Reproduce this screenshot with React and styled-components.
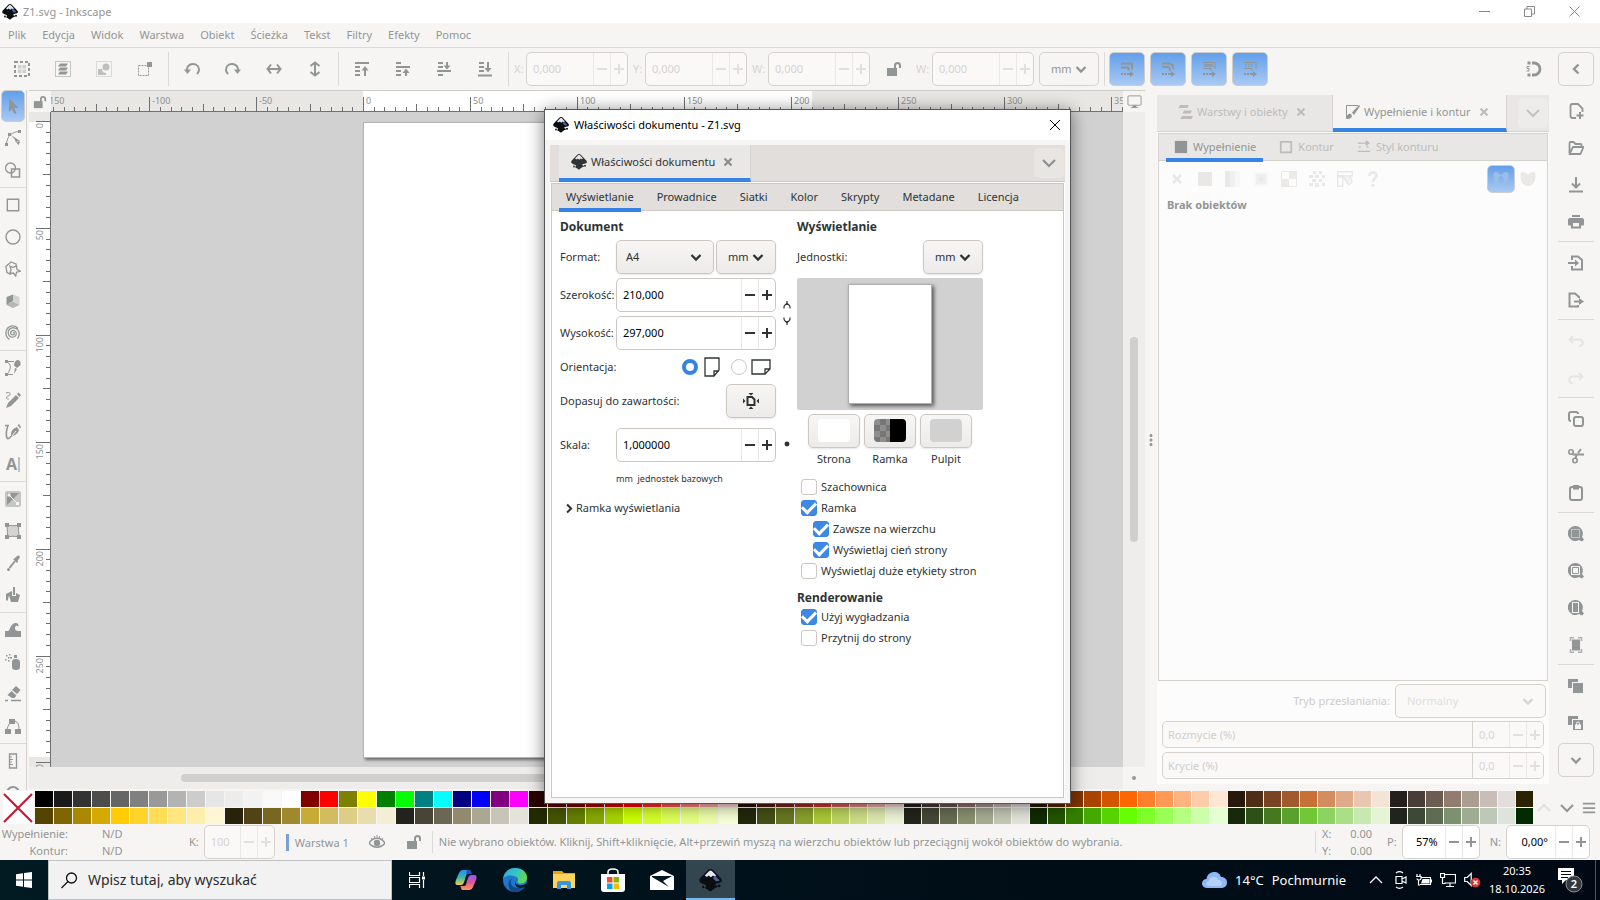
import styled, { createGlobalStyle, css } from "styled-components";

const GlobalStyle = createGlobalStyle`
  * {
    box-sizing: border-box;
  }
  body {
    margin: 0;
    overflow: hidden;
    background: #f6f5f4;
    color: #2e3436;
    font-family: "Noto Sans", "Open Sans", sans-serif;
    font-size: 11px;
    line-height: 16px;
  }
  button, input, select {
    margin: 0;
    padding: 0;
    font: inherit;
    color: inherit;
    border: 0;
    background: none;
    appearance: none;
    outline: 0;
  }
`;

/* ---------- icons ---------- */

const line = { fill: "none", stroke: "currentColor", strokeWidth: 2 };
const thin = { fill: "none", stroke: "currentColor", strokeWidth: 1 };

const ICONS = {
  selectAll: (
    <>
      <rect x="1" y="1" width="14" height="14" {...line} strokeDasharray="3 2" />
      <path d="M4 4h3.500v3.500H4zM8.500 4H12v3.500H8.500zM4 8.500h3.500V12H4zM8.500 8.500H12V12H8.500z" opacity=".4" />
    </>
  ),
  selectLayers: (
    <>
      <rect x=".5" y=".5" width="15" height="15" {...thin} strokeDasharray="1 1" />
      <path d="M5 2.500h8l-2 3H3zM5 6.500h8l-2 3H3zM5 10.500h8l-2 3H3z" />
    </>
  ),
  deselect: (
    <g opacity=".55">
      <rect x=".5" y=".5" width="15" height="15" {...thin} strokeDasharray="1 1" />
      <circle cx="10" cy="6" r="3.500" />
      <path d="M2 8h4c0 3 2 4 4 4v2H2z" />
    </g>
  ),
  touch: (
    <>
      <path d="M1.500 4.500h10v10h-10z" {...thin} strokeDasharray="2 1" />
      <path d="M10 1h5v5h-5z" />
    </>
  ),
  rotateLeft: (
    <>
      <path d="M3 11C2 6 5 3 9 3c4 0 6 3 6 6 0 2-1 3-2 4" {...line} />
      <path d="M0 8.500h7L3.500 13z" />
    </>
  ),
  rotateRight: (
    <>
      <path d="M13 11c1-5-2-8-6-8-4 0-6 3-6 6 0 2 1 3 2 4" {...line} />
      <path d="M16 8.500H9l3.500 4.500z" />
    </>
  ),
  flipH: <path d="M5 3.500L1.500 8 5 12.500M11 3.500L14.500 8 11 12.500M2 8h12" {...line} />,
  flipV: <path d="M3.500 5L8 1.500 12.500 5M3.500 11L8 14.500 12.500 11M8 2v12" {...line} />,
  raiseTop: (
    <>
      <path d="M1 2h14M1 6h5M1 10h5M1 14h5M11 15V7" {...line} />
      <path d="M7.500 9.500L11 5l3.500 4.500z" />
    </>
  ),
  raise: (
    <>
      <path d="M1 2h5M1 6h14M1 10h5M1 14h5M11 15v-5" {...line} />
      <path d="M7.500 12L11 7.500l3.500 4.500z" />
    </>
  ),
  lower: (
    <>
      <path d="M2 2h5M2 6h5M1 10h14M2 14h5M11 1v4" {...line} />
      <path d="M7.500 4.500h7L11 8.500z" />
    </>
  ),
  lowerBottom: (
    <>
      <path d="M2 2h5M2 6h5M2 10h5M1 14.500h14M11 1v7" {...line} />
      <path d="M7.500 7h7L11 11.500z" />
    </>
  ),
  unlock: (
    <>
      <path d="M1 7h10v8H1z" />
      <path d="M9 8V4.500a2.500 2.500 0 0 1 5 0V7" {...line} />
    </>
  ),
  scaleStroke: (
    <>
      <path d="M2 2.500h11v6M2 6.500h7.500v3" {...line} />
      <path d="M2 12h2v2H2zM5 12h2v2H5zM8 12h3v-2l4 3-4 3v-2H8z" />
    </>
  ),
  scaleCorners: (
    <>
      <path d="M2 2.500h6c4 0 5.500 2 5.500 6M2 6h5c2.500 0 3 2 3 4" {...line} strokeWidth="1.800" />
      <path d="M2 12h2v2H2zM5 12h2v2H5zM8 12h3v-2l4 3-4 3v-2H8z" />
    </>
  ),
  scaleGradient: (
    <>
      <path d="M2 1.500h12V8M2 7.500h8V10" {...thin} />
      <path d="M3 3h9v3H3z" opacity=".7" />
      <path d="M2 12h2v2H2zM5 12h2v2H5zM8 12h3v-2l4 3-4 3v-2H8z" />
    </>
  ),
  scalePattern: (
    <>
      <path d="M2 1.500h12V8M2 7.500h8V10M3 3l1.500 1.500L3 6M6 3l1.500 1.500L6 6M9 3l1.500 1.500L9 6" {...thin} />
      <path d="M2 12h2v2H2zM5 12h2v2H5zM8 12h3v-2l4 3-4 3v-2H8z" />
    </>
  ),
  snap: (
    <>
      <path d="M6 2h2a6 6 0 0 1 0 12H6" {...line} strokeWidth="2.800" />
      <path d="M1.500.6h3v2.800h-3zM1.500 12.600h3v2.800h-3z" />
      <path d="M3.500 5.500H1v2h2v2.500H.5" {...thin} />
    </>
  ),
  back: <path d="M10.500 3.500L6 8l4.500 4.500" {...line} strokeWidth="2.400" />,
  down: <path d="M3.500 6L8 10.500 12.500 6" {...line} strokeWidth="2.300" />,
  downWide: <path d="M2 5l6 6 6-6" {...line} />,
  upWide: <path d="M2 11l6-6 6 6" {...line} />,
  right: <path d="M5 3l5 5-5 5" {...line} strokeWidth="2.500" />,
  minus: <path d="M3 8h10" {...line} />,
  plus: <path d="M3 8h10M8 3v10" {...line} />,
  close: <path d="M4 4l8 8M12 4l-8 8" {...line} strokeWidth="2.500" />,
  menu: <path d="M1 3h14M1 8h14M1 13h14" {...line} />,
  dots: <path d="M8 2a1.500 1.500 0 1 1 0 3 1.500 1.500 0 0 1 0-3zm0 4.500a1.500 1.500 0 1 1 0 3 1.500 1.500 0 0 1 0-3zM8 11a1.500 1.500 0 1 1 0 3 1.500 1.500 0 0 1 0-3z" />,
  dot: <circle cx="8" cy="8" r="2.200" />,
  arrow: <path d="M4 0v14l3-3 2.500 5 2-1-2.500-5h4.500z" />,
  node: (
    <>
      <path d="M1.500 14C2 6 7 2 14 1.500" {...thin} />
      <path d="M0 13h3v3H0zM3 3h3v3H3zM13 0h3v3h-3zM6 5l9 6-4 1.500L9.500 9zM11 12l2.500 3 1.500-3-2-1z" />
    </>
  ),
  builder: (
    <>
      <circle cx="5.500" cy="6" r="5" {...thin} strokeWidth="1.300" />
      <path d="M6.500 7h8v8h-8z" {...thin} strokeWidth="1.500" />
    </>
  ),
  rect: <path d="M1.500 1.500h13v13h-13z" {...thin} strokeWidth="1.600" />,
  circle: <circle cx="8" cy="8" r="7" {...thin} strokeWidth="1.400" />,
  star: (
    <>
      <path d="M6 13.500l-4-2L.8 5.500 6 1l5 2 .5 3" {...thin} strokeWidth="1.300" />
      <path d="M5 5l3 1.500L11.500 5l.5 3.500 3.300 1.700-3.800 1-.8 3.800-2.400-3-3.500.500L6 9z" {...thin} strokeWidth="1.300" />
    </>
  ),
  cube: (
    <>
      <path d="M1.500 4L8 1.500V8l-6.500 4z" />
      <path d="M8 1.500L14.500 4v8L8 8z" opacity=".35" />
      <path d="M1.500 12L8 8.500l6.500 3.500L8 15z" opacity=".65" />
    </>
  ),
  spiral: (
    <path
      d="M8 8c1-1 2 1 .5 1.700C6.500 10.500 5 8.500 6 6.800 7.500 4.500 11 5.500 11.300 8.300c.2 3-3 4.500-5.500 3.500C2.800 10.500 2.500 6.500 4.500 4.300 7 1.800 11.500 2.500 13.300 5.500c1.500 2.500 1 5.500-.8 8M13 3.500C10-.5 4 .3 1.800 4.500 0 8 1 12.500 4.500 14.500"
      {...thin}
      strokeWidth="1.300"
    />
  ),
  pen: (
    <>
      <path d="M1.500 1.500C5 4 6 6 5 9c-1 3-2 4-3 5.500h6M2 1.500h7" {...thin} />
      <path d="M0 0h3v3H0zM0 13h3v3H0zM12 0c3 0 4 2 3.500 5L12 8 9 5.500C9 3 10 1 12 0zM10 8l2 1-3 5z" />
    </>
  ),
  pencil: (
    <>
      <path d="M1 1c3-1 5 0 4 2-1 1-4 1-3.500 3C2 7 3 7 4 7" {...thin} />
      <path d="M11 3l3 3-8 8-5 2 2-5zM12 2l1.500-1.500L16 3l-1.500 2z" />
    </>
  ),
  calligraphy: (
    <>
      <path d="M0 1.500h3C1 6 1 12 2 14c1 1.500 3 0 4-2" {...line} strokeWidth="1.600" />
      <path d="M6 12c0-5 1-7 6-9l2 3c-1 4-4 5-8 7zM12.500 1l1.500-1 2 3-1 1.500z" />
      <path d="M7 12l4-5" stroke="#f6f5f4" />
    </>
  ),
  gradient: (
    <>
      <rect x="0" y="0" width="16" height="16" rx="2" opacity=".5" />
      <path d="M2 2h12L8 8 2 14z" />
      <path d="M4 4l8 8" stroke="#f6f5f4" />
      <path d="M2.500 2.500h3v3h-3zM11 11h3v3h-3z" fill="#f6f5f4" />
    </>
  ),
  mesh: (
    <>
      <path d="M2 2c4 1 8 1 12 0-1 4 0 8 0 12-4-1-8-1-12 0 1-4 0-8 0-12z" opacity=".35" />
      <path d="M2 2c4 1 8 1 12 0-1 4 0 8 0 12-4-1-8-1-12 0 1-4 0-8 0-12z" {...thin} />
      <path d="M0 0h4v4H0zM12 0h4v4h-4zM0 12h4v4H0zM12 12h4v4h-4z" />
    </>
  ),
  dropper: (
    <>
      <path d="M9.500 3.500L12 1c2-1.500 3.500 0 2.500 2L12.500 6l.500 1-1 1-4-4z" />
      <path d="M10 6l-5.500 7" {...line} />
      <circle cx="3.500" cy="14.500" r="1.500" />
    </>
  ),
  bucket: (
    <>
      <path d="M1 7l6-3 8 4-2 7H6L4 8.500 2.500 14 1 13z" />
      <path d="M9 1v8" stroke="#f6f5f4" strokeWidth="4" />
      <path d="M9 0v8" {...line} />
    </>
  ),
  tweak: <path d="M0 9h3c2 0 2-7 7-8 3-.500 4 2 3.500 3.500C12 3 10 3.500 10 6c0 2 1 3 3 3h3v6H0z" />,
  spray: (
    <>
      <path d="M7 8c0-2 1-3 3-3h1c2 0 4 1 4 3v5c0 2-1 3-4 3s-4-1-4-3zM9 1h3v3H9z" />
      <path d="M1 1h1.500v1.500H1zM4 0h1.500v1.500H4zM3 3h1.500v1.500H3zM0 5h1.500v1.500H0zM5 3h2v1.500H5zM3 6h1.500v1.500H3z" />
    </>
  ),
  eraser: (
    <>
      <path d="M11 0l4.500 4-3.500 4-5-4zM6.500 5l5 4.500-2 2.500H7L2.500 9z" />
      <path d="M0 14.500h3M6 14.500h10" {...thin} strokeWidth="1.500" />
    </>
  ),
  connector: (
    <>
      <path d="M4 1h6v5H4zM0 11h6v5H0zM10 11h6v5h-6z" />
      <path d="M4 6l-2 5M10 3c3 1 4 4 4 8" {...thin} />
    </>
  ),
  measure: (
    <>
      <path d="M4.500 1h7v14h-7z" {...thin} strokeWidth="1.300" />
      <path d="M5 4h2M5 6.500h3M5 9h2M5 11.500h3" {...thin} />
    </>
  ),
  zoom: <circle cx="8" cy="8" r="6" {...line} />,
  monitor: (
    <>
      <rect x="1" y="2" width="14" height="10" rx="1" {...thin} />
      <path d="M6 12h4v2H6zM4 14h8v1H4z" />
    </>
  ),
  layers: <path d="M3 1h9l-1.500 3H1.500zM7 6.500h8l-1.500 3H5.500zM5 12h11l-1.500 3H3.500z" />,
  fillStroke: (
    <>
      <path d="M2.500 14V1.500H14" {...thin} />
      <path d="M2 15c1-5 3-6 5-5l1 2c-1 3-3 3-6 3zM8 8.500L15 1l1 1-6 9z" />
    </>
  ),
  square: <path d="M1 1h14v14H1z" />,
  squareOutline: <path d="M2 2h12v12H2z" {...line} />,
  strokeStyle: (
    <>
      <path d="M1 3.500h12M2 8h2M11 8h2M1 13h14" {...line} strokeWidth="1.500" />
      <path d="M10 0l5 3.500L10 7z" />
    </>
  ),
  linear: (
    <>
      <path d="M0 0h5v16H0z" />
      <path d="M5 0h5v16H5z" opacity=".6" />
      <path d="M10 0h5v16h-5z" opacity=".25" />
    </>
  ),
  radial: (
    <>
      <path d="M1 1h14v14H1z" opacity=".25" />
      <path d="M3 3h10v10H3z" opacity=".5" />
      <path d="M6 6h4v4H6z" />
    </>
  ),
  meshFill: (
    <>
      <path d="M.5.5h15v15H.5z" {...thin} />
      <path d="M8 1h7v7H8zM1 8h7v7H1z" opacity=".9" />
    </>
  ),
  pattern: (
    <path d="M4 0h3v3H4zM10 0h3v3h-3zM0 4h4v3H0zM6 4h4v3H6zM13 4h3v3h-3zM3 8h4v3H3zM10 8h3v3h-3zM0 12h4v3H0zM6 12h4v4H6zM13 12h3v3h-3z" />
  ),
  swatch: (
    <>
      <path d="M.7.7h14.600v4H.7zM.7 5v10.300h5V6.500zM6 5.500l6 8.500 3-3-1.500-6" {...thin} strokeWidth="1.400" />
      <path d="M6 5h8v4l-2 3z" opacity=".5" />
    </>
  ),
  help: (
    <>
      <path d="M4.500 5C4.500 0 11.500.5 11.500 4.500 11.500 7 8 7.500 8 11" {...line} strokeWidth="2.600" />
      <circle cx="8" cy="14.300" r="1.600" />
    </>
  ),
  evenOdd: (
    <path
      fillRule="evenodd"
      d="M3 1c2 0 3 1 3 2 1 1 3 1 4 0 0-1 1-2 3-2 3 0 3 4 2 8-1 4-4 6-7 6s-6-2-7-6C0 5 0 1 3 1zM8 5c-2 0-3 3-3 5s1 3 3 3 3-1 3-3-1-5-3-5z"
    />
  ),
  nonZero: <path d="M3 1c2 0 3 2 5 2s3-2 5-2c3 0 3 4 2 8-1 4-4 6-7 6s-6-2-7-6C0 5 0 1 3 1z" />,
  newDoc: (
    <>
      <path d="M8 15H4.500C3 15 2.500 14 2.500 13V3c0-1.500.5-2 2-2H10l4.500 4.500V9" {...line} strokeWidth="1.800" />
      <path d="M12 9v7M8.500 12.500h7" {...line} />
    </>
  ),
  open: (
    <path
      d="M1.500 14V3c0-.5.5-1 1-1h3l2 2h5c.5 0 1 .5 1 1v1.500M1.500 14L5 7h10.500L12.500 14z"
      {...line}
      strokeWidth="1.800"
      strokeLinejoin="round"
    />
  ),
  save: <path d="M8 0v10M4 6.500L8 10.500l4-4M1 14.500h14" {...line} />,
  print: (
    <>
      <path d="M4 1h8v2H4zM2 4h12c1.500 0 2 1 2 2v4c0 1-.5 1.500-1.500 1.500H13V9H3v2.500H1.500C.5 11.500 0 11 0 10V6c0-1 .5-2 2-2z" />
      <path d="M4 9v4.500h8V9" {...line} />
    </>
  ),
  importDoc: (
    <>
      <path d="M4 5V1.500h6L14 5v9.500H4V11" {...line} />
      <path d="M0 8h8" {...line} />
      <path d="M7 4.500L11 8l-4 3.500z" />
    </>
  ),
  exportDoc: (
    <>
      <path d="M10 13v1.500H1.500v-13H7L11 5v1" {...line} />
      <path d="M6 9.500h6" {...line} />
      <path d="M11 6l5 3.500-5 3.500z" />
    </>
  ),
  undo: <path d="M5 3L1.500 6.500 5 10M2 6.500h9.500a3 3 0 0 1 0 6.500" {...line} />,
  redo: <path d="M11 3l3.500 3.500L11 10M14 6.500H4.500a3 3 0 0 0 0 6.500" {...line} />,
  copy: (
    <>
      <rect x="6" y="6" width="9" height="9" rx="2" {...line} />
      <path d="M3 10C1.500 10 1 9 1 8V3c0-1 1-2 2-2h5c1 0 2 .5 2 2" {...line} />
    </>
  ),
  cut: (
    <>
      <circle cx="3" cy="4" r="2.200" {...line} strokeWidth="1.600" />
      <circle cx="7" cy="12.500" r="2.200" {...line} strokeWidth="1.600" />
      <path d="M4.500 6.500H16M7.500 10.500L8.500 7M10 5l3-4" {...line} />
    </>
  ),
  paste: (
    <>
      <rect x="2" y="2" width="12" height="13" rx="2" {...line} />
      <path d="M5 0h6v4.500H5z" />
    </>
  ),
  zoomSelection: (
    <>
      <path d="M7.500 0a7.500 7.500 0 0 1 6.500 11l2 2.500-2 2-3-1.500A7.500 7.500 0 1 1 7.500 0z" />
      <path d="M3.500 3.500h8v8h-8z" fill="none" stroke="#f6f5f4" strokeDasharray="1 1" />
    </>
  ),
  zoomDrawing: (
    <>
      <path d="M7.500 0a7.500 7.500 0 0 1 6.500 11l2 2.500-2 2-3-1.500A7.500 7.500 0 1 1 7.500 0z" />
      <path d="M3 3h9v9H3z" fill="#f6f5f4" />
      <path d="M4.500 4.500h6v6h-6z" {...thin} />
    </>
  ),
  zoomPage: (
    <>
      <path d="M7.500 0a7.500 7.500 0 0 1 6.500 11l2 2.500-2 2-3-1.500A7.500 7.500 0 1 1 7.500 0z" />
      <path d="M4 2h7v11H4z" fill="#f6f5f4" />
      <path d="M5 3h5v9H5z" />
    </>
  ),
  zoomCenter: (
    <>
      <path d="M4 2.500h8v11H4z" />
      <path d="M2.500 4V.8H6M10 .8h3.500V4M2.500 12v3.200H6M10 15.200h3.500V12" {...thin} strokeWidth="1.500" opacity=".7" />
    </>
  ),
  duplicate: (
    <>
      <path d="M0 1h10v3H4v6H0z" />
      <path d="M5 5h10v10H5z" />
    </>
  ),
  clone: (
    <>
      <path d="M0 1h10v3H4v6H0z" />
      <path d="M5 5h10v10H5z" />
      <path d="M7 9.500h6V14H7z" fill="#f6f5f4" />
      <path d="M8.500 10V8.500a1.500 1.500 0 0 1 3 0V10" fill="none" stroke="#f6f5f4" />
    </>
  ),
  eye: (
    <>
      <path d="M0 9c4-6.500 12-6.500 16 0-4 5.500-12 5.500-16 0z" {...thin} strokeWidth="1.500" />
      <circle cx="8" cy="9" r="3.200" />
      <path d="M2 4l1.500 2M5 2l1 2M8 1v2.500M11 2l-1 2M14 4l-1.500 2" {...thin} />
    </>
  ),
  fit: (
    <>
      <path d="M4.500 4h4.500l2.500 2.500V12h-7z" {...line} />
      <path d="M5.500 0h5L8 2.500zM5.500 16h5L8 13.500zM0 5.500v5L2.500 8zM16 5.500v5L13.500 8z" />
    </>
  ),
};

const Svg = styled.svg`
  display: block;
  flex: none;
  fill: currentColor;
`;

function Icon({ name, size = 16 }) {
  return (
    <Svg width={size} height={size} viewBox="0 0 16 16" aria-hidden="true">
      {ICONS[name]}
    </Svg>
  );
}

function InkscapeLogo({ size = 16, flat }) {
  return (
    <Svg width={size} height={size} viewBox="0 0 32 32" aria-hidden="true">
      <path
        fill={flat ? "#2e3436" : "#0b0d12"}
        d="M16 0c1.500 0 2.500.5 3.500 1.500L30.500 13c2.500 3 1.500 5-2 6-3 1-6 1-6 2.500s4 1 3.500 3c-.5 1.500-3 1.500-4 2 0 2-3 1.500-3.500 3-.5 2-4.500 2-5.500 0-.5-1.500-4-1.500-4.500-3-.5-1.500 2-1.500 1.500-3C9.500 22 7 21 4 20c-4-1.500-4.500-4-2.500-7L12.500 1.500C13.500.5 14.500 0 16 0z"
      />
      <path
        fill={flat ? "#e9e8e6" : "#e4e8f0"}
        d="M16 2c1 0 1.500.3 2.200 1L24 9.200l-2.500 1.500-2-1.700-3 2.500-3-2.500-2.500 2L8 9.200 13.800 3c.7-.7 1.200-1 2.200-1z"
      />
      {!flat && <path fill="#46649a" d="M22 9l6.500 6.500c0 1-3 1.500-5 1.500l-4-4z" />}
      <circle cx="6" cy="25" r="1.800" fill={flat ? "#2e3436" : "#0b0d12"} />
      <circle cx="28" cy="23.500" r="2" fill={flat ? "#2e3436" : "#0b0d12"} />
    </Svg>
  );
}

/* ---------- shared controls ---------- */

const Vertical = styled.span`
  flex: none;
  width: 1px;
  height: ${(p) => p.$h || 34}px;
  margin: 0 2px 0 3px;
  background: #dcdad7;
`;

const SpinBox = styled.span`
  display: flex;
  flex: none;
  width: ${(p) => (p.$w ? p.$w + "px" : "auto")};
  height: 34px;
  overflow: hidden;
  border: 1px solid ${(p) => (p.$tone === "live" ? "#cdc7c2" : "#d5d1cd")};
  border-radius: 5px;
  background: ${(p) => (p.$tone === "off" ? "#faf9f8" : "#fff")};
  color: ${(p) => (p.$tone === "off" ? "#d6d3d0" : "#000")};

  input {
    flex: 1;
    min-width: 0;
    padding-left: 6px;
    text-align: ${(p) => p.$align || "left"};
    padding-right: ${(p) => (p.$align ? 7 : 0)}px;
  }
  button {
    display: flex;
    align-items: center;
    justify-content: center;
    width: 17px;
    border-left: 1px solid #eae8e6;
    color: ${(p) => ({ live: "#2e3436", ghost: "#929595", off: "#e2e0dd" })[p.$tone]};
  }
`;

function Spin({ value, label, id, tone = "live", width, align }) {
  return (
    <SpinBox $tone={tone} $w={width} $align={align}>
      <input id={id} aria-label={id ? undefined : label} defaultValue={value} disabled={tone === "off"} />
      <button type="button" aria-label="Zmniejsz">
        <Icon name="minus" size={16} />
      </button>
      <button type="button" aria-label="Zwiększ">
        <Icon name="plus" size={16} />
      </button>
    </SpinBox>
  );
}

const Combo = styled.span`
  display: grid;
  flex: none;
  align-items: center;
  width: ${(p) => p.$w}px;
  height: 34px;
  border: 1px solid ${(p) => (p.$tone === "live" ? "#cdc7c2" : "#d5d1cd")};
  border-radius: 5px;
  background: ${(p) => ({ live: "linear-gradient(#f7f6f5, #edebe9)", ghost: "#f6f5f4", off: "#faf9f8" })[p.$tone]};
  color: ${(p) => ({ live: "#2e3436", ghost: "#929595", off: "#d6d3d0" })[p.$tone]};
  box-shadow: ${(p) => (p.$tone === "live" ? "0 1px 2px rgba(0, 0, 0, 0.1)" : "none")};

  select {
    grid-area: 1 / 1;
    width: 100%;
    height: 100%;
    padding-left: ${(p) => p.$pad || 11}px;
  }
  svg {
    grid-area: 1 / 1;
    justify-self: end;
    margin-right: 9px;
    pointer-events: none;
  }
`;

function DropDown({ id, label, value, width, tone = "live", pad }) {
  return (
    <Combo $w={width} $tone={tone} $pad={pad}>
      <select id={id} aria-label={id ? undefined : label} disabled={tone === "off"}>
        <option>{value}</option>
      </select>
      <Icon name="down" />
    </Combo>
  );
}

/* ---------- main window chrome ---------- */

const Window = styled.div`
  position: relative;
  display: flex;
  flex-direction: column;
  height: 100vh;
  color: #929595;
`;

const TitleBar = styled.header`
  display: flex;
  align-items: center;
  gap: 5px;
  flex: none;
  height: 23px;
  padding-left: 2px;
  background: #fff;
`;

const WindowButtons = styled.div`
  display: flex;
  margin-left: auto;
  padding-right: 3px;

  button {
    display: flex;
    justify-content: center;
    width: 45px;
  }
`;

const MenuBar = styled.nav`
  display: flex;
  flex: none;
  gap: 16px;
  height: 25px;
  padding: 4px 8px 0;
  border-bottom: 1px solid #dcdad7;

  a {
    color: inherit;
    text-decoration: none;
  }
`;

const Toolbar = styled.div`
  display: flex;
  align-items: center;
  flex: none;
  height: 42px;
  padding: 1px 6px 2px 1px;
`;

const ToolButton = styled.button`
  display: flex;
  align-items: center;
  justify-content: center;
  flex: none;
  width: 41px;
  height: 34px;
`;

const CoordLabel = styled.label`
  display: flex;
  align-items: center;
  gap: 3px;
  padding-left: ${(p) => p.$pad || 5}px;
  color: #d6d3d0;

  > b {
    width: ${(p) => p.$w || 9}px;
    font-weight: 400;
    white-space: nowrap;
  }
`;

const Toggles = styled.div`
  display: flex;
  gap: 5px;
  margin-left: 2px;
`;

const blueFill = css`
  border: 1px solid #cfccc9;
  border-radius: 5px;
  background: linear-gradient(#629fea, #a9c9f3);
`;

const Toggle = styled.button`
  display: flex;
  align-items: center;
  justify-content: center;
  width: 36px;
  height: 34px;
  ${blueFill}
`;

const OutlineButton = styled.button`
  display: flex;
  align-items: center;
  justify-content: center;
  flex: none;
  width: 36px;
  height: 34px;
  border: 1px solid #d5d1cd;
  border-radius: 5px;
`;

const Push = styled.span`
  flex: 1;
`;

const Middle = styled.main`
  display: flex;
  flex: 1;
  min-height: 0;
`;

const ToolBox = styled.div`
  flex: none;
  width: 27px;
  margin-right: 2px;
  overflow: hidden;
  border-right: 1px solid #d5d1cd;

  hr {
    height: 1px;
    margin: 1px 0;
    border: 0;
    background: #dcdad7;
  }
`;

const Tool = styled.button`
  display: flex;
  align-items: center;
  justify-content: center;
  width: 24px;
  height: 32px;
  margin-left: 1px;
  ${(p) => p.$on && blueFill}
`;

const TextTool = styled.span`
  padding-right: 1px;
  border-right: 2px solid #bfc1c1;
  font-size: 16px;
  line-height: 15px;
  font-weight: 700;
`;

const CanvasGrid = styled.section`
  display: grid;
  flex: 1;
  grid-template: 21px 1fr 22px / 22px 1fr 22px;
  min-width: 0;
  margin-bottom: 1px;
  border-top: 1px solid #cfcdca;
`;

const Corner = styled.div`
  display: flex;
  align-items: center;
  justify-content: center;
`;

const RulerBox = styled.div`
  overflow: hidden;
  min-width: 0;
  min-height: 0;
  background: #e8e7e4;
  color: #6d7173;

  svg {
    display: block;
  }
  text {
    font-size: 9px;
    fill: #8d9091;
  }
`;

const Desk = styled.div`
  position: relative;
  overflow: hidden;
  background: #d1d1d1;
`;

const Page = styled.div`
  position: absolute;
  left: 312px;
  top: 10px;
  width: 450px;
  height: 636px;
  border: 1px solid #b5b5b5;
  background: #fff;
  box-shadow: 2px 2px 3px rgba(0, 0, 0, 0.5);
`;

const ScrollTrack = styled.div`
  display: flex;
  align-items: ${(p) => (p.$vertical ? "flex-start" : "center")};
  justify-content: ${(p) => (p.$vertical ? "center" : "flex-start")};
  padding: ${(p) => (p.$vertical ? "225px 0 0" : "0 0 0 152px")};
  background: #eeedeb;
  grid-column: ${(p) => (p.$vertical ? "auto" : "1 / 3")};
`;

const Thumb = styled.span`
  width: ${(p) => p.$w}px;
  height: ${(p) => p.$h}px;
  border-radius: 4px;
  background: #cfcfce;
`;

const Handle = styled.div`
  display: flex;
  align-items: center;
  justify-content: center;
  flex: none;
  width: 12px;
`;

const U = 2.138;

function ticks(from, to) {
  const list = [];
  for (let v = from; v <= to; v += 5) list.push(v);
  return list;
}

function TopRuler() {
  return (
    <RulerBox>
      <svg width="100%" height="21">
        <rect x="312" width={210 * U} height="21" fill="#fff" />
        <g stroke="currentColor">
          {ticks(-145, 355).map((v) => (
            <path key={v} d={`M${Math.round(312 + v * U) + 0.5} ${v % 50 === 0 ? 6 : v % 25 === 0 ? 13 : 16}V21`} />
          ))}
          <path d="M0 20.500H3000" />
        </g>
        <text x="-2" y="13">150</text>
        {ticks(-100, 350)
          .filter((v) => v % 50 === 0)
          .map((v) => (
            <text key={v} x={Math.round(312 + v * U) + 3} y="13">{v}</text>
          ))}
      </svg>
    </RulerBox>
  );
}

function SideRuler() {
  return (
    <RulerBox>
      <svg width="22" height="100%">
        <rect y="10" width="22" height={297 * U} fill="#fff" />
        <g stroke="currentColor">
          {ticks(0, 300).map((v) => (
            <path key={v} d={`M${v % 50 === 0 ? 7 : v % 25 === 0 ? 14 : 17} ${Math.round(9 + v * U) + 0.5}H22`} />
          ))}
          <path d="M21.500 0V3000" />
        </g>
        {ticks(0, 300)
          .filter((v) => v % 50 === 0)
          .map((v) => (
            <text key={v} transform={`translate(14 ${Math.round(11 + v * U)}) rotate(-90)`} textAnchor="end">
              {v}
            </text>
          ))}
      </svg>
    </RulerBox>
  );
}

/* ---------- docked panel ---------- */

const Dock = styled.aside`
  display: flex;
  flex-direction: column;
  flex: none;
  width: 392px;
  margin: 5px 0 6px;
  background: #fcfcfc;
`;

const DockTabs = styled.div`
  display: flex;
  flex: none;
  height: 37px;
  border-bottom: 1px solid ${(p) => (p.$live ? "#cdc7c2" : "#d5d1cd")};
  background: ${(p) => (p.$live ? "#e1dedb" : "#e8e7e5")};
`;

const DockTab = styled.button`
  display: flex;
  align-items: center;
  gap: 4px;
  width: ${(p) => p.$w}px;
  padding-left: ${(p) => p.$pad}px;
  margin-bottom: -1px;
  border-right: 1px solid #d5d1cd;
  border-bottom: 4px solid ${(p) => (p.$on ? "#3584e4" : "transparent")};
  background: ${(p) => (p.$on ? p.$bg : "none")};
  background-clip: padding-box;
  color: ${(p) => (p.$live ? "#2e3436" : p.$on ? "#929595" : "#bdbcbb")};
  white-space: nowrap;

  svg:last-child {
    margin-left: 2px;
    color: ${(p) => (p.$live ? "#8b8e8f" : "#bdbcbb")};
  }
`;

const MoreButton = styled.button`
  display: flex;
  align-items: center;
  justify-content: center;
  width: 30px;
  height: 30px;
  margin: 3px 1px 0 auto;
  border-radius: 5px;
  background: ${(p) => (p.$live ? "#e8e6e3" : "#edecea")};
  color: ${(p) => (p.$live ? "#8b8e8f" : "#c3c2c0")};
`;

const Notebook = styled.div`
  display: flex;
  flex: 1;
  flex-direction: column;
  min-height: 0;
  margin: 1px 1px 0;
  border: 1px solid ${(p) => (p.$live ? "#cdc7c2" : "#d5d1cd")};
  background: ${(p) => (p.$live ? "#fff" : "#fcfcfc")};
`;

const PaintTabs = styled.div`
  display: flex;
  gap: 8px;
  flex: none;
  height: 27px;
  padding-left: 7px;
  border-bottom: 1px solid #d5d1cd;
  background: #e8e7e5;
`;

const PaintTab = styled.button`
  display: flex;
  align-items: center;
  gap: 5px;
  padding: 2px 7px 0 8px;
  margin-bottom: -2px;
  border-bottom: 4px solid ${(p) => (p.$on ? "#3584e4" : "transparent")};
  color: ${(p) => (p.$on ? "#929595" : "#bdbcbb")};
`;

const PaintRow = styled.div`
  display: flex;
  align-items: center;
  gap: 12px;
  height: 34px;
  padding: 2px 11px 0 10px;
  color: #e9e8e7;
`;

const FillRule = styled.button`
  display: flex;
  align-items: center;
  justify-content: center;
  width: 28px;
  height: 28px;
  margin: 0 -6px;
  ${(p) => p.$on && blueFill}
  ${(p) => p.$on && "color: #9cbde8; margin-right: -7px;"}
`;

const Empty = styled.p`
  margin: 2px 0 0 8px;
  font-weight: 700;
`;

const BlendRow = styled.label`
  display: flex;
  align-items: center;
  justify-content: flex-end;
  gap: 5px;
  margin: 3px 3px;
  color: #cfccc9;
`;

const ScaleRow = styled.div`
  display: flex;
  height: 27px;
  margin: 0 5px 4px;
  border: 1px solid #d5d1cd;
  border-radius: 5px;
  background: #faf9f8;
  color: #d0cdca;

  &:last-child {
    margin-bottom: 5px;
  }
  label {
    flex: 1;
    padding: 5px;
  }
  > span {
    height: 25px;
    border-width: 0 0 0 1px;
    border-radius: 0 4px 4px 0;
  }
`;

const CommandBar = styled.div`
  display: flex;
  flex-direction: column;
  align-items: center;
  flex: none;
  width: 51px;
  padding: 2px 6px 0 9px;
  overflow: hidden;

  hr {
    align-self: stretch;
    height: 1px;
    margin: 1px 0 2px;
    border: 0;
    background: #dcdad7;
  }
  > button:last-child {
    margin-top: 2px;
  }
`;

const Command = styled.button`
  display: flex;
  align-items: center;
  justify-content: center;
  flex: none;
  width: 36px;
  height: 37px;
  color: ${(p) => (p.disabled ? "#e6e4e1" : "inherit")};
`;

/* ---------- palette and status ---------- */

const Palette = styled.div`
  display: flex;
  align-items: center;
  flex: none;
  height: 34px;
  padding: 1px 4px 0 3px;
`;

const NoPaint = styled.button`
  width: 30px;
  height: 33px;
  margin-right: 2px;
  background: #fff;
`;

const Swatches = styled.div`
  display: grid;
  flex: 1;
  grid-template-columns: repeat(41, 19fr) repeat(40, 18fr);
  grid-auto-rows: 16px;
  gap: 1px 0;
`;

const Swatch = styled.button`
  margin-right: 1px;
  background: #${(p) => p.$c};
`;

const PaletteArrows = styled.div`
  display: flex;
  align-items: center;
  gap: 7px;
  margin-left: 2px;

  svg:first-child {
    color: #e3e1df;
  }
`;

const StatusBar = styled.footer`
  display: flex;
  align-items: center;
  flex: none;
  height: 36px;
  padding-right: 10px;
`;

const StyleGrid = styled.dl`
  display: grid;
  grid-template-columns: ${(p) => p.$cols};
  column-gap: ${(p) => p.$gap}px;
  margin: 0;
  line-height: 17px;

  dt {
    text-align: ${(p) => p.$align};
  }
  dd {
    margin: 0;
  }
`;

const StatusField = styled.label`
  display: flex;
  align-items: center;
  gap: 5px;
  margin-left: ${(p) => p.$ml}px;
`;

const LayerName = styled.button`
  width: 76px;
  margin: 0 7px 0 11px;
  padding-left: 6px;
  border-left: 3px solid #7ba0d2;
  height: 17px;
  line-height: 17px;
  text-align: left;
`;

const Message = styled.p`
  flex: 1;
  margin: 0 0 0 4px;
  overflow: hidden;
  white-space: nowrap;
`;

const Gap = styled.span`
  width: ${(p) => p.$w}px;
  flex: none;
`;

const GREYS = "000000 1a1a1a 333333 4d4d4d 666666 808080 999999 b3b3b3 cccccc e6e6e6 ececec f2f2f2 f9f9f9 ffffff";
const BASICS = "800000 ff0000 808000 ffff00 008000 00ff00 008080 00ffff 000080 0000ff 800080 ff00ff";
const REDS =
  "2b0000 550000 800000 aa0000 d40000 ff0000 ff2a2a ff5555 ff8080 ffaaaa ffd5d5 280b0b 501616 782121 a02c2c c83737 d35f5f de8787 e9afaf f4d7d7 241c1c 483737 6c5353 916f6f ac9393 c8b7b7 e3dbdb";
const ORANGES =
  "2b1100 552200 803300 aa4400 d45500 ff6600 ff7f2a ff9955 ffb380 ffccaa ffe6d5 28170b 502d16 784421 a05a2c c87137 d38d5f deaa87 e9c6af f4e3d7 241f1c 483e37 6c5d53 917c6f ac9d93 c8beb7 e3dedb";
const YELLOWS =
  "2b2200 554400 806600 aa8800 d4aa00 ffcc00 ffd42a ffdd55 ffe680 ffeeaa fff6d5 28220b 504416 786721 a0892c c8ab37 d3bc5f decd87 e9ddaf f4eed7 24221c 484537 6c6753 918a6f aca793 c8c4b7 e3e2db";
const LIMES =
  "222b00 445500 668000 88aa00 aad400 ccff00 d4ff2a ddff55 e5ff80 eeffaa f6ffd5 22280b 445016 677821 89a02c abc837 bcd35f cdde87 dde9af eef4d7 23241c 454837 676c53 8a916f a7ac93 c4c8b7 e2e3db";
const GREENS =
  "112b00 225500 338000 44aa00 55d400 66ff00 7fff2a 99ff55 b3ff80 ccffaa e5ffd5 17280b 2d5016 447821 5aa02c 71c837 8dd35f aade87 c6e9af e3f4d7 1f241c 3e4837 5d6c53 7c916f 9dac93 bec8b7 dee3db 002b00";
const COLORS = [GREYS, BASICS, REDS, ORANGES, YELLOWS, LIMES, GREENS].join(" ").split(" ");

/* ---------- document properties dialog ---------- */

const Dialog = styled.section`
  position: absolute;
  left: 544px;
  top: 109px;
  display: flex;
  flex-direction: column;
  width: 527px;
  height: 695px;
  border: 1px solid #55585a;
  background: #f6f5f4;
  color: #2e3436;
  box-shadow: 0 2px 16px rgba(0, 0, 0, 0.5);
`;

const DialogTitle = styled.header`
  display: flex;
  align-items: center;
  gap: 5px;
  flex: none;
  height: 30px;
  padding: 0 9px 0 8px;
  background: #fff;
  color: #000;

  h1 {
    flex: 1;
    margin: 0;
    font-size: 11px;
    font-weight: 400;
  }
`;

const DialogBody = styled.div`
  display: flex;
  flex: 1;
  flex-direction: column;
  margin: 5px;
  background: #fff;
`;

const SubTabs = styled.div`
  display: flex;
  gap: 1px;
  flex: none;
  height: 27px;
  padding-left: 3px;
  border-bottom: 1px solid #cdc7c2;
  background: #e1dedb;
`;

const SubTab = styled.button`
  margin: 0 4px -2px;
  padding: 2px 7px 0;
  border-bottom: 4px solid ${(p) => (p.$on ? "#3584e4" : "transparent")};
`;

const Columns = styled.div`
  display: flex;
  padding: 8px;
`;

const Left = styled.div`
  width: 216px;
`;

const LinkColumn = styled.div`
  display: flex;
  flex-direction: column;
  align-items: center;
  width: 21px;
  padding-top: 80px;
  gap: 108px;
`;

const Right = styled.div`
  width: 186px;
`;

const Heading = styled.h2`
  margin: 0;
  font-size: 12px;
  line-height: 16px;
  font-weight: 700;
`;

const RenderHeading = styled(Heading)`
  margin-top: 11px;
`;

const FormRow = styled.div`
  display: flex;
  align-items: center;
  justify-content: space-between;
  height: 34px;
  margin-top: ${(p) => p.$mt ?? 4}px;
  white-space: nowrap;
`;

const Field = styled.span`
  display: flex;
  align-items: center;
  gap: 2px;
`;

const Radio = styled.input`
  width: 16px;
  height: 16px;
  border: 1px solid #cdc7c2;
  border-radius: 50%;
  background: #fff;

  &:checked {
    border: 4px solid #3584e4;
  }
`;

const Orientation = styled.div`
  display: flex;
  align-items: center;
  gap: 6px;
  padding-right: 5px;

  label {
    display: flex;
    margin-right: 5px;
  }
  label:last-child {
    margin-right: 0;
    margin-left: -2px;
  }
`;

const LiveButton = styled.button`
  display: flex;
  align-items: center;
  justify-content: center;
  width: ${(p) => p.$w}px;
  height: 34px;
  border: 1px solid #cdc7c2;
  border-radius: 5px;
  background: linear-gradient(#f7f6f5, #edebe9);
  box-shadow: 0 1px 2px rgba(0, 0, 0, 0.1);
`;

const Hint = styled.p`
  margin: 9px 0 0 56px;
  font-size: 9px;
  line-height: 16px;
`;

const Expander = styled.button`
  display: flex;
  align-items: center;
  margin: 13px 0 0 3px;
`;

const Preview = styled.div`
  display: flex;
  justify-content: center;
  height: 132px;
  padding: 6px 0;
  margin-top: 4px;
  border-radius: 2px;
  background: #d1d1d1;

  span {
    width: 84px;
    border: 1px solid #b0b0b0;
    background: #fff;
    box-shadow: 2px 2px 4px rgba(0, 0, 0, 0.6);
  }
`;

const ColorRow = styled.div`
  display: flex;
  justify-content: center;
  gap: 4px;
  margin-top: 4px;

  label {
    display: flex;
    flex-direction: column;
    align-items: center;
    gap: 3px;
  }
`;

const Chip = styled.span`
  width: 32px;
  height: 23px;
  margin-bottom: 1px;
  border-radius: 4px;
  background: ${(p) => p.$bg};
`;

const Checks = styled.div`
  display: flex;
  flex-direction: column;
  gap: 5px;
  padding: ${(p) => p.$pt || 0}px 0 0 4px;
`;

const Check = styled.label`
  display: flex;
  align-items: center;
  gap: 4px;
  height: 16px;
  padding-left: ${(p) => (p.$nested ? 12 : 0)}px;
  white-space: nowrap;

  input {
    display: grid;
    place-items: center;
    flex: none;
    width: 16px;
    height: 16px;
    border: 1px solid #cdc7c2;
    border-radius: 3px;
    background: #fff;
  }
  input:checked {
    border-color: #3584e4;
    background: #3d89e5;
  }
  input:checked::before {
    content: "";
    width: 11px;
    height: 6px;
    margin-bottom: 4px;
    border: solid #fff;
    border-width: 0 0 3px 3px;
    transform: rotate(-45deg);
  }
`;

function CheckItem({ text, on, nested }) {
  return (
    <Check $nested={nested}>
      <input type="checkbox" defaultChecked={on} />
      {text}
    </Check>
  );
}

const SUBTABS = ["Wyświetlanie", "Prowadnice", "Siatki", "Kolor", "Skrypty", "Metadane", "Licencja"];

function DocumentProperties() {
  return (
    <Dialog role="dialog" aria-label="Właściwości dokumentu">
      <DialogTitle>
        <InkscapeLogo />
        <h1>Właściwości dokumentu - Z1.svg</h1>
        <button type="button" aria-label="Zamknij">
          <Svg width="12" height="12" viewBox="0 0 12 12">
            <path d="M1 1l10 10M11 1L1 11" stroke="#000" />
          </Svg>
        </button>
      </DialogTitle>
      <DialogBody>
        <DockTabs $live>
          <Gap $w={9} />
          <DockTab $live $on $w={192} $pad={12} $bg="#e9e8e6">
            <InkscapeLogo flat />
            Właściwości dokumentu
            <Icon name="close" size={14} />
          </DockTab>
          <MoreButton $live aria-label="Więcej">
            <Icon name="downWide" />
          </MoreButton>
        </DockTabs>
        <Notebook $live>
          <SubTabs>
            {SUBTABS.map((name, i) => (
              <SubTab key={name} $on={i === 0}>{name}</SubTab>
            ))}
          </SubTabs>
          <Columns>
            <Left>
              <Heading>Dokument</Heading>
              <FormRow $mt={5}>
                <label htmlFor="format">Format:</label>
                <Field>
                  <DropDown id="format" value="A4" width={98} pad={9} />
                  <DropDown label="Jednostka formatu" value="mm" width={60} />
                </Field>
              </FormRow>
              <FormRow>
                <label htmlFor="width">Szerokość:</label>
                <Spin id="width" value="210,000" width={160} />
              </FormRow>
              <FormRow>
                <label htmlFor="height">Wysokość:</label>
                <Spin id="height" value="297,000" width={160} />
              </FormRow>
              <FormRow $mt={0}>
                <span>Orientacja:</span>
                <Orientation>
                  <Radio type="radio" name="orient" id="portrait" defaultChecked />
                  <label htmlFor="portrait" aria-label="Pionowa">
                    <Svg width="16" height="20" viewBox="0 0 16 20">
                      <path d="M1 1h14v12l-5 6H1zM10 19v-5h5" fill="none" stroke="#2e3436" strokeWidth="1.300" />
                    </Svg>
                  </label>
                  <Radio type="radio" name="orient" id="landscape" />
                  <label htmlFor="landscape" aria-label="Pozioma">
                    <Svg width="20" height="16" viewBox="0 0 20 16">
                      <path d="M1 1h18v9l-5 5H1zM14 15v-5h5" fill="none" stroke="#2e3436" strokeWidth="1.300" />
                    </Svg>
                  </label>
                </Orientation>
              </FormRow>
              <FormRow $mt={0}>
                <span id="fit">Dopasuj do zawartości:</span>
                <LiveButton $w={50} aria-labelledby="fit">
                  <Icon name="fit" />
                </LiveButton>
              </FormRow>
              <FormRow $mt={10}>
                <label htmlFor="scale">Skala:</label>
                <Spin id="scale" value="1,000000" width={160} />
              </FormRow>
              <Hint>mm&nbsp; jednostek bazowych</Hint>
              <Expander>
                <Icon name="right" size={13} />
                Ramka wyświetlania
              </Expander>
            </Left>
            <LinkColumn>
              <Svg width="12" height="28" viewBox="0 0 12 28">
                <path
                  d="M6 2v4M3 9.500V8c0-2 2-2 3-4 1 2 3 2 3 4v1.500M6 26v-4M3 18.500V20c0 2 2 2 3 4 1-2 3-2 3-4v-1.500"
                  fill="none"
                  stroke="#2e3436"
                  strokeWidth="1.200"
                />
              </Svg>
              <Icon name="dot" size={18} />
            </LinkColumn>
            <Right>
              <Heading>Wyświetlanie</Heading>
              <FormRow $mt={5}>
                <label htmlFor="units">Jednostki:</label>
                <DropDown id="units" value="mm" width={60} />
              </FormRow>
              <Preview>
                <span />
              </Preview>
              <ColorRow>
                <label>
                  <LiveButton $w={52}>
                    <Chip $bg="#fff" />
                  </LiveButton>
                  Strona
                </label>
                <label>
                  <LiveButton $w={52}>
                    <Chip $bg="linear-gradient(90deg, transparent 50%, #000 50%), repeating-conic-gradient(#777 0 25%, #8e8e8e 0 50%) 0 0 / 12px 12px" />
                  </LiveButton>
                  Ramka
                </label>
                <label>
                  <LiveButton $w={52}>
                    <Chip $bg="#d1d1d1" />
                  </LiveButton>
                  Pulpit
                </label>
              </ColorRow>
              <Checks $pt={12}>
                <CheckItem text="Szachownica" />
                <CheckItem text="Ramka" on />
                <CheckItem text="Zawsze na wierzchu" on nested />
                <CheckItem text="Wyświetlaj cień strony" on nested />
                <CheckItem text="Wyświetlaj duże etykiety stron" />
              </Checks>
              <RenderHeading>Renderowanie</RenderHeading>
              <Checks $pt={3}>
                <CheckItem text="Użyj wygładzania" on />
                <CheckItem text="Przytnij do strony" />
              </Checks>
            </Right>
          </Columns>
        </Notebook>
      </DialogBody>
    </Dialog>
  );
}

/* ---------- taskbar ---------- */

const Taskbar = styled.div`
  display: flex;
  align-items: center;
  flex: none;
  height: 40px;
  background: linear-gradient(90deg, #021a22, #000e18 60%, #010a14);
  color: #fff;
`;

const Start = styled.button`
  display: flex;
  justify-content: center;
  width: 48px;
`;

const Search = styled.label`
  display: flex;
  align-items: center;
  gap: 10px;
  width: 344px;
  height: 40px;
  padding-left: 12px;
  border: 1px solid #bfc0c1;
  background: #f2f2f2;
  color: #111;

  input {
    flex: 1;
    font-size: 14px;
  }
  input::placeholder {
    color: #2b2b2b;
    opacity: 1;
  }
`;

const TaskButton = styled.button`
  display: flex;
  align-items: center;
  justify-content: center;
  width: 49px;
  height: 40px;
  ${(p) => p.$on && "background: #334650; border-bottom: 2px solid #76b9ed; padding-top: 2px;"}
`;

const Weather = styled.button`
  display: flex;
  align-items: center;
  gap: 8px;
  margin-right: 22px;
  font-size: 13px;
`;

const Tray = styled.div`
  display: flex;
  align-items: center;
  gap: 8px;
`;

const Clock = styled.time`
  width: 66px;
  margin-left: 3px;
  line-height: 18px;
  text-align: center;
`;

const Notices = styled.button`
  display: flex;
  width: 28px;
  margin: 0 10px 0 7px;
  padding-right: 4px;
`;

const Peek = styled.span`
  width: 5px;
  height: 40px;
  border-left: 1px solid #4b5560;
`;

function WindowsTaskbar() {
  return (
    <Taskbar>
      <Start aria-label="Start">
        <Svg width="16" height="16" viewBox="0 0 16 16">
          <path d="M0 2.200l7-1v6.300H0zM8 1l8-1v7.500H8zM0 8.500h7v6.300l-7-1zM8 8.500h8V16l-8-1z" />
        </Svg>
      </Start>
      <Search>
        <Svg width="17" height="17" viewBox="0 0 17 17">
          <circle cx="10.500" cy="6" r="5" fill="none" stroke="#111" strokeWidth="1.300" />
          <path d="M7 9.500L.5 16" stroke="#111" strokeWidth="1.300" />
        </Svg>
        <input aria-label="Wyszukaj" placeholder="Wpisz tutaj, aby wyszukać" />
      </Search>
      <TaskButton aria-label="Widok zadań">
        <Svg width="16" height="16" viewBox="0 0 16 16">
          <path d="M.5 0v3.500h10V0M.5 16v-3.500h10V16M.5 5.500h10v5H.5zM14.500 0v4M14.500 8v8" fill="none" stroke="#fff" strokeWidth="1.200" />
          <path d="M13 4.500h3v3h-3z" />
        </Svg>
      </TaskButton>
      <TaskButton aria-label="Copilot">
        <Svg width="22" height="22" viewBox="0 0 22 22">
          <defs>
            <linearGradient id="cp1" x1="0" y1="0" x2="0" y2="1">
              <stop offset="0" stopColor="#2a8cf0" />
              <stop offset=".5" stopColor="#37b9b0" />
              <stop offset="1" stopColor="#f5cf3a" />
            </linearGradient>
            <linearGradient id="cp2" x1="0" y1="0" x2="0" y2="1">
              <stop offset="0" stopColor="#8a5cf0" />
              <stop offset=".5" stopColor="#e0569c" />
              <stop offset="1" stopColor="#ff9a4a" />
            </linearGradient>
          </defs>
          <path d="M8 1h6c2 0 2 2 2.500 4H13c-2 0-2 2-3 5-1 4-2 6-4 6H3c-3 0-3-2-2-5l3-7c1-2 2-3 4-3z" fill="url(#cp1)" />
          <path d="M14 21H8c-2 0-2-2-2.500-4H9c2 0 2-2 3-5 1-4 2-6 4-6h3c3 0 3 2 2 5l-3 7c-1 2-2 3-4 3z" fill="url(#cp2)" />
          <path d="M12 1h2c2 0 2 2 2.500 4H13c-1 0-1.500.5-2 1.500z" fill="#1b4fc4" />
        </Svg>
      </TaskButton>
      <TaskButton aria-label="Edge">
        <Svg width="24" height="24" viewBox="0 0 24 24">
          <defs>
            <linearGradient id="ed1" x1="0" y1="0" x2="1" y2=".4">
              <stop offset="0" stopColor="#2fa6e8" />
              <stop offset=".6" stopColor="#37c6c0" />
              <stop offset="1" stopColor="#62d84e" />
            </linearGradient>
          </defs>
          <circle cx="12" cy="12" r="12" fill="#1d78cf" />
          <path d="M0 11C1 4 6 0 12 0c8 0 12 5 12 9.500 0 4-3 6-6 6s-4-1-3.500-2c1-1 1-4-2-5C7 6.500 2 8 0 11z" fill="url(#ed1)" />
          <path d="M9 10c-3 4 0 10 5 10 4 0 6-1 8-3-2 5-7 7-11 7-6-1-8-10-2-14z" fill="#134a8e" />
          <path d="M13.500 12c-2 1-1.500 4 2 5 3 .7 6 0 8-2l.5 1.500-1.500 2c-4 2.500-10 2-10.500-3 0-2 .5-3 1.500-3.500z" fill="#021a22" />
        </Svg>
      </TaskButton>
      <TaskButton aria-label="Eksplorator plików">
        <Svg width="22" height="20" viewBox="0 0 22 20">
          <path d="M0 1h9l2 2h11v15H0z" fill="#e8a511" />
          <path d="M0 4h22v14H0z" fill="#ffd35c" />
          <path d="M4 19v-6c0-1 1-2 2-2h10c1 0 2 1 2 2v6h-4v-4H8v4z" fill="#3a96dd" />
        </Svg>
      </TaskButton>
      <TaskButton aria-label="Sklep">
        <Svg width="24" height="24" viewBox="0 0 24 24">
          <path d="M7 7V4c0-4 10-4 10 0v3" fill="none" stroke="#fff" strokeWidth="1.500" />
          <path d="M0 6h24v15c0 2-1 3-3 3H3c-2 0-3-1-3-3z" />
          <path d="M6 9h5.500v5.500H6z" fill="#f25022" />
          <path d="M12.500 9H18v5.500h-5.500z" fill="#7fba00" />
          <path d="M6 15.500h5.500V21H6z" fill="#00a4ef" />
          <path d="M12.500 15.500H18V21h-5.500z" fill="#ffb900" />
        </Svg>
      </TaskButton>
      <TaskButton aria-label="Poczta">
        <Svg width="24" height="20" viewBox="0 0 24 20">
          <path d="M0 6l12-6 12 6v14H0z" />
          <path d="M2 6h20l-9 5 6 6L2 7z" fill="#021720" />
        </Svg>
      </TaskButton>
      <TaskButton $on aria-label="Inkscape">
        <InkscapeLogo size={23} />
      </TaskButton>
      <Push />
      <Weather>
        <Svg width="25" height="17" viewBox="0 0 25 17">
          <path d="M6 16C2 16 0 14 0 11.500S2 7 4.500 7C5 3 8 0 12 0s6 2 7 5c4 0 6 2.500 6 5.500S23 16 19 16z" fill="#8fb8f6" />
          <path d="M7 14c-3 0-4-4 0-5 0-5 8-6 9-1 4-1 6 5 2 6z" fill="#b5d1fb" />
        </Svg>
        <span>14°C</span>
        <span>Pochmurnie</span>
      </Weather>
      <Tray>
        <Svg width="16" height="16" viewBox="0 0 16 16">
          <path d="M2 11l6-6 6 6" fill="none" stroke="#fff" strokeWidth="1.300" />
        </Svg>
        <Svg width="16" height="18" viewBox="0 0 16 18">
          <path d="M4 5.500h6v7H4zM10 8l4-2v6l-4-2M4 2c2-1.500 5-1.500 7 0M4 16c2 1.500 5 1.500 7 0" fill="none" stroke="#fff" strokeWidth="1.200" />
        </Svg>
        <Svg width="16" height="14" viewBox="0 0 16 14">
          <path d="M5.500 4.500h9v7H4M1 1v2M4 1v2M0 3.500h5v2c0 2-4 2-4 0M2.500 7v5H4" fill="none" stroke="#fff" strokeWidth="1.200" />
          <path d="M6.500 6h7v4.500H5zM15 6.500h1v3h-1z" />
        </Svg>
        <Svg width="16" height="14" viewBox="0 0 16 14">
          <path d="M4 1.500h11.500V10H4.500M10 10v3M6 13.500h8M.5.500h4v4h-4zM2.500 5v5.500h3" fill="none" stroke="#fff" strokeWidth="1.200" />
        </Svg>
        <Svg width="17" height="16" viewBox="0 0 17 16">
          <path d="M.7 5.500h2.500l4-4v12l-4-4H.7z" fill="none" stroke="#fff" strokeWidth="1.200" />
          <circle cx="11.500" cy="10.500" r="4.800" fill="#e03131" />
          <path d="M9.500 8.500l4 4M13.500 8.500l-4 4" stroke="#fff" strokeWidth="1.400" />
        </Svg>
      </Tray>
      <Clock>
        20:35
        <br />
        18.10.2026
      </Clock>
      <Notices aria-label="Powiadomienia">
        <Svg width="26" height="26" viewBox="0 0 26 26">
          <path d="M1 1h16v12H9l-4 4v-4H1z" />
          <path d="M4 4.500h10M4 7.500h10M4 10.500h7" stroke="#010a14" />
          <circle cx="17" cy="17" r="8" fill="#34393f" stroke="#8a8f94" />
          <text x="17" y="21" textAnchor="middle" fontSize="11" fontWeight="600">2</text>
        </Svg>
      </Notices>
      <Peek />
    </Taskbar>
  );
}

/* ---------- page ---------- */

const MENUS = ["Plik", "Edycja", "Widok", "Warstwa", "Obiekt", "Ścieżka", "Tekst", "Filtry", "Efekty", "Pomoc"];

const TOOL_GROUPS = [
  ["arrow", "node", "builder"],
  ["rect", "circle", "star", "cube", "spiral"],
  ["pen", "pencil", "calligraphy", "text"],
  ["gradient", "mesh", "dropper", "bucket"],
  ["tweak", "spray", "eraser", "connector"],
  ["measure", "zoom"],
];

const COMMAND_GROUPS = [
  ["newDoc", "open", "save", "print"],
  ["importDoc", "exportDoc"],
  ["undo", "redo"],
  ["copy", "cut", "paste"],
  ["zoomSelection", "zoomDrawing", "zoomPage", "zoomCenter"],
  ["duplicate", "clone"],
];

const BAR_GROUPS = [
  ["selectAll", "selectLayers", "deselect", "touch"],
  ["rotateLeft", "rotateRight", "flipH", "flipV"],
  ["raiseTop", "raise", "lower", "lowerBottom"],
];

const PAINTS = ["close", "square", "linear", "radial", "meshFill", "pattern", "swatch", "help"];

const Num = styled.dd`
  text-align: right;
`;

export default function App() {
  return (
    <Window>
      <GlobalStyle />
      <TitleBar>
        <InkscapeLogo />
        <span>Z1.svg - Inkscape</span>
        <WindowButtons>
          <button type="button" aria-label="Minimalizuj">
            <Svg width="11" height="11" viewBox="0 0 11 11"><path d="M0 5.500h11" stroke="#888" /></Svg>
          </button>
          <button type="button" aria-label="Przywróć">
            <Svg width="11" height="11" viewBox="0 0 11 11">
              <path d="M.5 3h7v7.500h-7zM3 3V.5h7.500V8H8" fill="none" stroke="#888" />
            </Svg>
          </button>
          <button type="button" aria-label="Zamknij">
            <Svg width="11" height="11" viewBox="0 0 11 11"><path d="M.5.5l10 10M10.500.5l-10 10" stroke="#888" /></Svg>
          </button>
        </WindowButtons>
      </TitleBar>

      <MenuBar>
        {MENUS.map((name) => (
          <a key={name} href="#menu">{name}</a>
        ))}
      </MenuBar>

      <Toolbar>
        {BAR_GROUPS.map((group) => [
          ...group.map((name) => (
            <ToolButton key={name} aria-label={name}>
              <Icon name={name} />
            </ToolButton>
          )),
          <Vertical key={group[0] + "-sep"} />,
        ])}
        <CoordLabel $pad={3}><b>X:</b><Spin value="0,000" tone="off" width={102} /></CoordLabel>
        <CoordLabel><b>Y:</b><Spin value="0,000" tone="off" width={102} /></CoordLabel>
        <CoordLabel $w={13}><b>W:</b><Spin value="0,000" tone="off" width={102} /></CoordLabel>
        <Gap $w={3} />
        <ToolButton aria-label="Zablokuj proporcje">
          <Icon name="unlock" />
        </ToolButton>
        <CoordLabel $pad={2} $w={13}><b>W:</b><Spin value="0,000" tone="off" width={102} /></CoordLabel>
        <Gap $w={5} />
        <DropDown label="Jednostka" value="mm" width={60} tone="ghost" />
        <Gap $w={2} />
        <Vertical />
        <Toggles>
          {["scaleStroke", "scaleCorners", "scaleGradient", "scalePattern"].map((name) => (
            <Toggle key={name} aria-label={name}>
              <Icon name={name} />
            </Toggle>
          ))}
        </Toggles>
        <Push />
        <ToolButton aria-label="Przyciąganie">
          <Icon name="snap" />
        </ToolButton>
        <Gap $w={4} />
        <OutlineButton aria-label="Zwiń">
          <Icon name="back" />
        </OutlineButton>
      </Toolbar>

      <Middle>
        <ToolBox>
          {TOOL_GROUPS.map((group, i) => [
            i > 0 && <hr key={i} />,
            ...group.map((name) => (
              <Tool key={name} $on={name === "arrow"} aria-label={name}>
                {name === "text" ? <TextTool>A</TextTool> : <Icon name={name} size={name === "rect" ? 14 : 16} />}
              </Tool>
            )),
          ])}
        </ToolBox>

        <CanvasGrid>
          <Corner><Icon name="unlock" size={14} /></Corner>
          <TopRuler />
          <Corner><Icon name="monitor" size={15} /></Corner>
          <SideRuler />
          <Desk><Page /></Desk>
          <ScrollTrack $vertical><Thumb $w={8} $h={205} /></ScrollTrack>
          <ScrollTrack><Thumb $w={720} $h={8} /></ScrollTrack>
          <Corner><Icon name="dot" size={14} /></Corner>
        </CanvasGrid>

        <Handle><Icon name="dots" /></Handle>

        <Dock>
          <DockTabs>
            <DockTab $w={176} $pad={20}>
              <Icon name="layers" />
              Warstwy i obiekty
              <Icon name="close" size={14} />
            </DockTab>
            <DockTab $on $w={174} $pad={11} $bg="#f6f5f4">
              <Icon name="fillStroke" />
              Wypełnienie i kontur
              <Icon name="close" size={14} />
            </DockTab>
            <MoreButton aria-label="Więcej"><Icon name="downWide" /></MoreButton>
          </DockTabs>
          <Notebook>
            <PaintTabs>
              <PaintTab $on><Icon name="square" size={14} />Wypełnienie</PaintTab>
              <PaintTab><Icon name="squareOutline" size={14} />Kontur</PaintTab>
              <PaintTab><Icon name="strokeStyle" size={14} />Styl konturu</PaintTab>
            </PaintTabs>
            <PaintRow>
              {PAINTS.map((name) => (
                <button key={name} type="button" aria-label={name}>
                  <Icon name={name} />
                </button>
              ))}
              <Push />
              <FillRule $on aria-label="Parzysto-nieparzyste"><Icon name="evenOdd" /></FillRule>
              <FillRule aria-label="Niezerowe"><Icon name="nonZero" /></FillRule>
            </PaintRow>
            <Empty>Brak obiektów</Empty>
          </Notebook>
          <BlendRow>
            Tryb przesłaniania:
            <DropDown value="Normalny" width={151} tone="off" />
          </BlendRow>
          <ScaleRow>
            <label htmlFor="blur">Rozmycie (%)</label>
            <Spin id="blur" value="0,0" tone="off" width={71} />
          </ScaleRow>
          <ScaleRow>
            <label htmlFor="opacity">Krycie (%)</label>
            <Spin id="opacity" value="0,0" tone="off" width={71} />
          </ScaleRow>
        </Dock>

        <CommandBar>
          {COMMAND_GROUPS.map((group, i) => [
            i > 0 && <hr key={i} />,
            ...group.map((name) => (
              <Command key={name} disabled={name === "undo" || name === "redo"} aria-label={name}>
                <Icon name={name} />
              </Command>
            )),
          ])}
          <OutlineButton aria-label="Więcej poleceń"><Icon name="down" /></OutlineButton>
        </CommandBar>
      </Middle>

      <Palette>
        <NoPaint aria-label="Brak">
          <Svg width="30" height="33" viewBox="0 0 30 33">
            <path d="M1 3l28 28M29 3L1 31" stroke="#c01c38" strokeWidth="2.200" />
          </Svg>
        </NoPaint>
        <Swatches>
          {COLORS.map((c, i) => (
            <Swatch key={i} $c={c} aria-label={"#" + c} />
          ))}
        </Swatches>
        <PaletteArrows>
          <Icon name="upWide" />
          <Icon name="downWide" />
          <Icon name="menu" size={14} />
        </PaletteArrows>
      </Palette>

      <StatusBar>
        <StyleGrid $cols="68px 65px" $gap={34} $align="right">
          <dt>Wypełnienie:</dt><dd>N/D</dd>
          <dt>Kontur:</dt><dd>N/D</dd>
        </StyleGrid>
        <StatusField $ml={22}>
          K:
          <Spin value="100" tone="off" width={71} />
        </StatusField>
        <LayerName>Warstwa 1</LayerName>
        <Icon name="eye" />
        <Gap $w={21} />
        <Icon name="unlock" />
        <Gap $w={7} />
        <Vertical $h={22} />
        <Message>
          Nie wybrano obiektów. Kliknij, Shift+kliknięcie, Alt+przewiń myszą na wierzchu obiektów lub przeciągnij wokół
          obiektów do wybrania.
        </Message>
        <Vertical $h={22} />
        <Gap $w={4} />
        <StyleGrid $cols="12px 38px" $gap={0} $align="left">
          <dt>X:</dt><Num>0.00</Num>
          <dt>Y:</dt><Num>0.00</Num>
        </StyleGrid>
        <StatusField $ml={15}>
          P:
          <Spin value="57%" tone="ghost" width={78} align="right" />
        </StatusField>
        <StatusField $ml={10}>
          N:
          <Spin value="0,00°" tone="ghost" width={84} align="right" />
        </StatusField>
      </StatusBar>

      <WindowsTaskbar />
      <DocumentProperties />
    </Window>
  );
}
